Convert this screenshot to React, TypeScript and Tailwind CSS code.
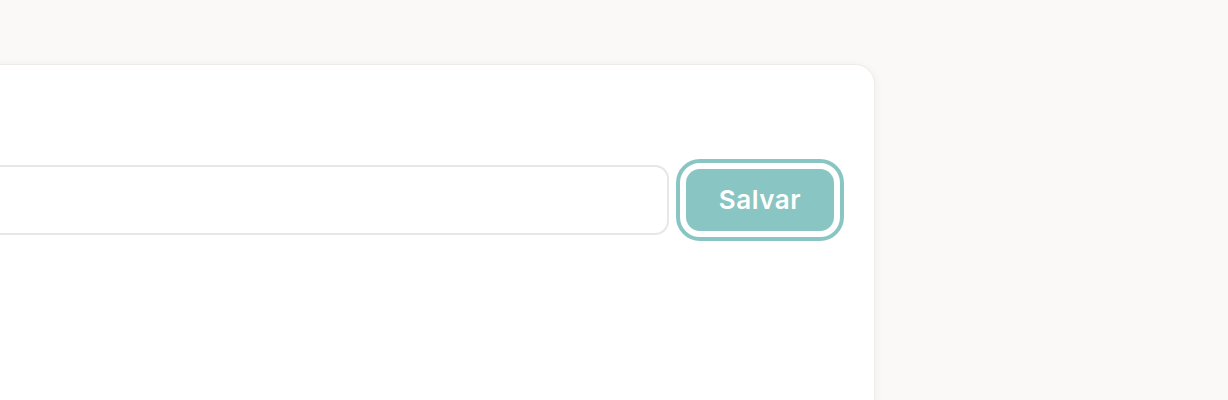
import { useState } from "react";

/** Settings card with a single text field and a focused save action. */
export default function App() {
  const [value, setValue] = useState("");

  return (
    <div
      className="h-[400px] w-full overflow-hidden bg-[#faf9f7] pt-16"
      style={{ fontFamily: "Inter, 'Noto Sans', sans-serif" }}
    >
      <div className="-ml-[120px] h-[400px] w-[995px] rounded-[20px] border border-[#eeebe8] bg-white px-10 pt-[100px] shadow-[0_2px_10px_rgba(60,50,40,0.06)]">
        <div className="flex items-center gap-[17px]">
          <input
            value={value}
            onChange={(e) => setValue(e.target.value)}
            className="h-[70px] flex-1 rounded-[14px] border-2 border-[#e9e6e3] bg-white px-5 text-lg text-[#333] outline-none"
          />
          <button
            type="button"
            className="h-[62px] w-[148px] rounded-[14px] bg-[#89c5c2] pb-[2px] text-[26px] font-semibold tracking-[0.02em] text-white outline-4 outline-offset-[6px] outline-[#89c5c2]"
            style={{ outlineStyle: "solid" }}
          >
            Salvar
          </button>
        </div>
      </div>
    </div>
  );
}
